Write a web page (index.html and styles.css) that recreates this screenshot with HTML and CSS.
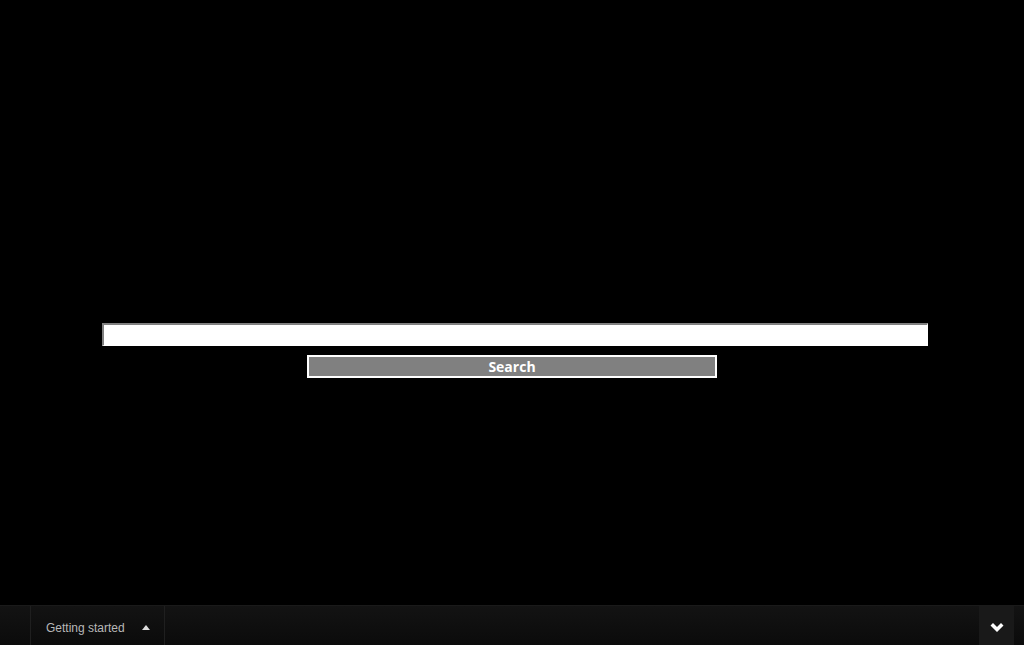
FILE: index.html
```html
<!DOCTYPE html>
<html>
<head>
<meta charset="utf-8">
<link rel="stylesheet" href="styles.css">
</head>
<body>
<main class="stage">
  <form class="search-form">
    <input class="search-input" type="text">
    <button class="search-btn" type="button">Search</button>
  </form>
</main>
<footer class="bar">
  <div class="bar-item">
    <span class="bar-label">Getting started</span>
    <span class="bar-arrow"></span>
  </div>
  <div class="bar-fill"></div>
  <div class="bar-toggle">
    <svg width="16" height="11" viewBox="0 0 16 11"><path d="M1.5 3.5 L4 1 L8 5 L12 1 L14.5 3.5 L8 10 Z" fill="#fff"/></svg>
  </div>
</footer>
</body>
</html>
```
FILE: styles.css
```css
html, body {
  margin: 0;
  padding: 0;
  background: #000;
  height: 645px;
  overflow: hidden;
}
.stage {
  height: 605px;
  box-sizing: border-box;
  padding-top: 323px;
}
.search-form {
  display: flex;
  flex-direction: column;
  margin: 0;
}
.search-input {
  box-sizing: border-box;
  width: 826px;
  height: 23px;
  margin: 0 0 0 102px;
  padding: 0 4px;
  background: #fff;
  border-style: solid;
  border-width: 2px 1px 1px 2px;
  border-color: #808080 #fff #fff #808080;
  outline: none;
}
.search-btn {
  box-sizing: border-box;
  width: 410px;
  height: 23px;
  margin: 9px 0 0 307px;
  padding: 0;
  background: #808080;
  border: 2px solid #fff;
  color: #fff;
  font-family: "Open Sans", sans-serif;
  font-weight: bold;
  font-size: 14px;
  line-height: 19px;
}
.bar {
  display: flex;
  height: 40px;
  box-sizing: border-box;
  border-top: 1px solid #1a1a1a;
  background: linear-gradient(#131313, #0b0b0b);
}
.bar-item {
  display: flex;
  align-items: center;
  margin-left: 30px;
  width: 135px;
  box-sizing: border-box;
  padding: 4px 0 0 15px;
  border-left: 1px solid #1f1f1f;
  border-right: 1px solid #1f1f1f;
}
.bar-label {
  font-family: "Liberation Sans", Arial, sans-serif;
  font-size: 12px;
  color: #b8b8b8;
}
.bar-arrow {
  width: 0;
  height: 0;
  margin-left: 17px;
  margin-top: -1px;
  border-left: 4px solid transparent;
  border-right: 4px solid transparent;
  border-bottom: 5px solid #ddd;
}
.bar-fill {
  flex: 1;
}
.bar-toggle {
  width: 35px;
  margin-right: 10px;
  padding-top: 4px;
  display: flex;
  align-items: center;
  justify-content: center;
  background: #191919;
}
```
